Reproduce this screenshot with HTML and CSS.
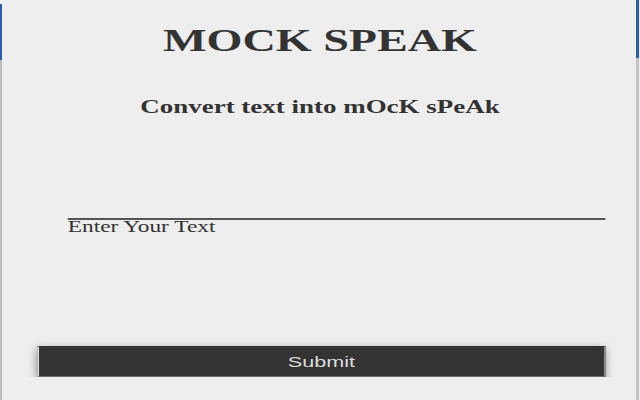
FILE: index.html
```html
<!DOCTYPE html>
<html lang="en">
<head>
<meta charset="utf-8">
<title>Mock Speak</title>
<link rel="stylesheet" href="styles.css">
</head>
<body>
<main class="app">
  <h1 class="title">MOCK SPEAK</h1>
  <h2 class="subtitle">Convert text into mOcK sPeAk</h2>
  <input class="text-input" type="text" placeholder="Enter Your Text">
  <button class="submit" type="button">Submit</button>
</main>
</body>
</html>
```
FILE: styles.css
```css
html {
  height: 100%;
  background:
    linear-gradient(#2d5cae, #2d5cae) left 4px / 2px 56px no-repeat,
    linear-gradient(#bcbcbc, #bcbcbc) left 60px / 2px 100% no-repeat,
    linear-gradient(#2d5cae, #2d5cae) right 1px top 0 / 3px 58px no-repeat,
    linear-gradient(#c4c4c4, #c4c4c4) right 1px top 58px / 3px 100% no-repeat,
    #eeeeee;
}

body {
  margin: 0;
  overflow: hidden;
}

.app {
  width: 444px;
  transform: scaleX(1.4414);
  transform-origin: 0 0;
  display: flex;
  flex-direction: column;
  color: #333333;
  font-family: "Liberation Serif", "Times New Roman", serif;
}

.title {
  margin: 22px 0 0;
  font-size: 32px;
  line-height: 36px;
  font-weight: bold;
  text-align: center;
}

.subtitle {
  margin: 38px 0 0;
  font-size: 18.72px;
  line-height: 22px;
  font-weight: bold;
  text-align: center;
}

.text-input {
  margin: 100px 0 0 47px;
  width: 373px;
  height: 14px;
  padding: 0;
  border: 0;
  border-top: 2px solid #555555;
  background: transparent;
  font-family: "Liberation Serif", "Times New Roman", serif;
  font-size: 16.2px;
  color: #333333;
  outline: none;
}

.text-input::placeholder {
  color: #333333;
  opacity: 1;
}

.submit {
  margin: 112px 0 0 26px;
  width: 394px;
  height: 31px;
  padding: 0;
  background: #333333;
  color: #dddddd;
  font-family: "Liberation Sans", Arial, sans-serif;
  font-size: 15px;
  border: 1px solid #333333;
  border-left-color: #f4f4f4;
  border-right-color: #8a8a8a;
  border-bottom-color: #6a6a6a;
  box-shadow: 0 3px 7px rgba(0, 0, 0, 0.45);
  cursor: pointer;
}
```
